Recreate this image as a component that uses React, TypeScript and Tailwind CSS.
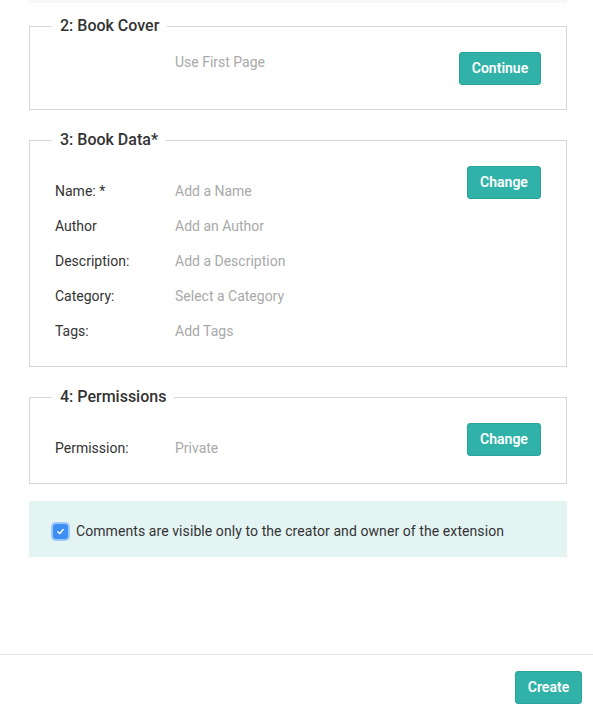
import React from "react";

function Btn({ children, w }: { children: React.ReactNode; w: string }) {
  return (
    <button
      className={`h-[33px] ${w} rounded-[3px] bg-[#30b2a9] border border-[#2aa39a] text-white text-[14px] font-semibold shrink-0`}
    >
      {children}
    </button>
  );
}

function Row({ label, value }: { label: string; value: string }) {
  return (
    <div className="flex h-[35px] items-center">
      <div className="w-[120px] text-[#333]">{label}</div>
      <div className="text-[#a9a9a9]">{value}</div>
    </div>
  );
}

export default function App() {
  return (
    <div
      className="flex h-[721px] flex-col bg-white text-[14px]"
      style={{ fontFamily: "Roboto, 'Noto Sans', sans-serif" }}
    >
      <div className="flex-1 pl-[29px] pr-[26px]">
        <div className="h-[3px] bg-[#f7f7f7]" />
        <fieldset className="mt-[13px] border border-[#d6d6d6] px-[25px] pt-4 pb-[24px]">
          <legend className="-ml-[3px] px-2 text-[16px] font-medium leading-[20px] text-[#333]">
            2: Book Cover
          </legend>
          <div className="flex items-start justify-between">
            <div className="flex">
              <div className="w-[120px]" />
              <div className="leading-[20px] text-[#a9a9a9]">Use First Page</div>
            </div>
            <Btn w="w-[82px]">Continue</Btn>
          </div>
        </fieldset>

        <fieldset className="mt-5 border border-[#d6d6d6] px-[25px] pt-4 pb-[17px]">
          <legend className="-ml-[3px] px-2 text-[16px] font-medium leading-[20px] text-[#333]">
            3: Book Data*
          </legend>
          <div className="flex items-start justify-between">
            <div className="pt-[8px]">
              <Row label="Name: *" value="Add a Name" />
              <Row label="Author" value="Add an Author" />
              <Row label="Description:" value="Add a Description" />
              <Row label="Category:" value="Select a Category" />
              <Row label="Tags:" value="Add Tags" />
            </div>
            <Btn w="w-[74px]">Change</Btn>
          </div>
        </fieldset>

        <fieldset className="mt-5 border border-[#d6d6d6] px-[25px] pt-4 pb-[17px]">
          <legend className="-ml-[3px] px-2 text-[16px] font-medium leading-[20px] text-[#333]">
            4: Permissions
          </legend>
          <div className="flex items-start justify-between">
            <div className="pt-[8px]">
              <Row label="Permission:" value="Private" />
            </div>
            <Btn w="w-[74px]">Change</Btn>
          </div>
        </fieldset>

        <div className="mt-[17px] flex h-[56px] items-center gap-2 bg-[#e4f4f3] pl-6 pt-[5px]">
          <span className="flex h-[15px] w-[15px] items-center justify-center rounded-[3px] bg-[#3d8ff5] shadow-[0_0_0_2px_rgba(96,165,250,0.55)]">
            <svg width="9" height="9" viewBox="0 0 10 10">
              <path d="M2 5.2 L4.2 7.3 L8 2.8" fill="none" stroke="white" strokeWidth="1.6" strokeLinecap="round" strokeLinejoin="round" />
            </svg>
          </span>
          <span className="text-[#333] tracking-[0.08px]">Comments are visible only to the creator and owner of the extension</span>
        </div>
      </div>

      <div className="flex justify-end border-t border-[#e6e6e6] pt-4 pr-[11px] pb-[17px]">
        <Btn w="w-[67px]">Create</Btn>
      </div>
    </div>
  );
}
